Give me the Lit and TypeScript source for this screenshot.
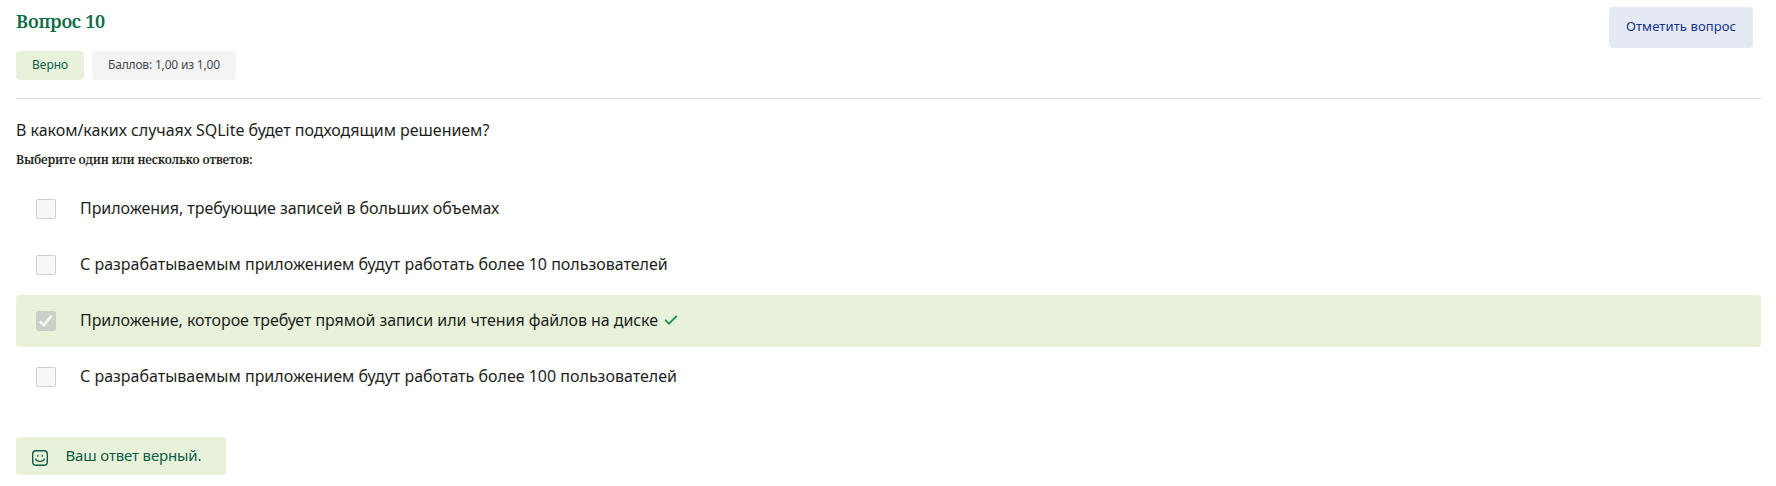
import { LitElement, html, css, nothing } from "lit";
import { customElement } from "lit/decorators.js";
import { classMap } from "lit/directives/class-map.js";

interface Answer {
  text: string;
  checked?: boolean;
}

const ANSWERS: Answer[] = [
  { text: "Приложения, требующие записей в больших объемах" },
  { text: "С разрабатываемым приложением будут работать более 10 пользователей" },
  { text: "Приложение, которое требует прямой записи или чтения файлов на диске", checked: true },
  { text: "С разрабатываемым приложением будут работать более 100 пользователей" },
];

@customElement("answer-list")
export class AnswerList extends LitElement {
  static styles = css`
    :host {
      display: flex;
      flex-direction: column;
      gap: 4px;
    }
    .row {
      display: flex;
      align-items: center;
      height: 52px;
      box-sizing: border-box;
      padding-left: 20px;
      border-radius: 4px;
      font-size: 16px;
      letter-spacing: -0.06px;
      color: #1d1f21;
    }
    .row:nth-child(even) {
      letter-spacing: 0;
    }
    .correct {
      background: #e8f2db;
    }
    .box {
      box-sizing: border-box;
      width: 20px;
      height: 20px;
      margin-right: 24px;
      border: 1px solid #cfcfcf;
      border-radius: 2px;
      background: #f8f8f8;
    }
    .checked {
      border: 0;
      background: #cbcfc8;
    }
    .box svg {
      display: block;
    }
    .text {
      line-height: 24px;
      padding-bottom: 2px;
      white-space: nowrap;
    }
    .tick {
      margin: 0 0 2px 6px;
    }
  `;

  render() {
    return ANSWERS.map(
      (a) => html`
        <div class=${classMap({ row: true, correct: !!a.checked })}>
          <span class=${classMap({ box: true, checked: !!a.checked })}>
            ${a.checked
              ? html`<svg width="20" height="20" viewBox="0 0 20 20" fill="none">
                  <path d="M4 10.2 7.8 14.2 15.7 4.6" stroke="#f4f7f1" stroke-width="2.7" />
                </svg>`
              : nothing}
          </span>
          <span class="text">${a.text}</span>
          ${a.checked
            ? html`<svg class="tick" width="14" height="12" viewBox="0 0 14 12" fill="none">
                <path d="M1.2 5.9 5 9.7 12.8 1.9" stroke="#1f8b4c" stroke-width="1.9" />
              </svg>`
            : nothing}
        </div>
      `,
    );
  }
}

@customElement("app-root")
export class AppRoot extends LitElement {
  static styles = css`
    :host {
      display: block;
      box-sizing: border-box;
      height: 486px;
      padding: 7px 15px 0 16px;
      background: #fff;
      font-family: "Noto Sans", "Open Sans", sans-serif;
      color: #1d1f21;
    }
    header {
      display: flex;
      justify-content: space-between;
      align-items: flex-start;
      box-sizing: border-box;
      height: 92px;
      padding-right: 8px;
      border-bottom: 1px solid #dadbdc;
    }
    h1 {
      margin: 2px 0 17px;
      font: 600 18px/25px "Noto Serif", "DejaVu Serif", serif;
      letter-spacing: -0.25px;
      color: #0a6b45;
    }
    .badges {
      display: flex;
      gap: 8px;
    }
    .badge {
      height: 29px;
      box-sizing: border-box;
      padding: 0 16px;
      border-radius: 4px;
      font-size: 12px;
      line-height: 28px;
      white-space: nowrap;
    }
    .ok {
      width: 68px;
      background: #e8f2db;
      color: #0d5c45;
    }
    .points {
      width: 144px;
      background: #f4f4f4;
      color: #46494c;
      letter-spacing: -0.18px;
    }
    button {
      width: 144px;
      height: 41px;
      padding: 0 0 2px;
      border: 0;
      border-radius: 4px;
      background: #e5e9f4;
      color: #12338a;
      font: 13px/39px "Noto Sans", "Open Sans", sans-serif;
      letter-spacing: 0.1px;
    }
    .question {
      margin: 19px 0 0;
      font-size: 16px;
      line-height: 24px;
      letter-spacing: -0.03px;
    }
    .hint {
      margin: 9px 0 14px;
      font: 600 12px/18px "Noto Serif", "DejaVu Serif", serif;
      letter-spacing: -0.2px;
    }
    .feedback {
      display: flex;
      align-items: center;
      box-sizing: border-box;
      width: 210px;
      height: 38px;
      margin-top: 34px;
      padding-left: 16px;
      border-radius: 4px;
      background: #e8f2db;
      color: #0d5c45;
      font-size: 15px;
      letter-spacing: -0.15px;
    }
    .feedback span {
      line-height: 22px;
      padding-bottom: 2px;
    }
    .feedback svg {
      margin: 4px 17.5px 0 0;
    }
  `;

  render() {
    return html`
      <header>
        <div>
          <h1>Вопрос 10</h1>
          <div class="badges">
            <span class="badge ok">Верно</span>
            <span class="badge points">Баллов: 1,00 из 1,00</span>
          </div>
        </div>
        <button>Отметить вопрос</button>
      </header>
      <p class="question">В каком/каких случаях SQLite будет подходящим решением?</p>
      <p class="hint">Выберите один или несколько ответов:</p>
      <answer-list></answer-list>
      <div class="feedback">
        <svg width="16" height="16" viewBox="0 0 16 16" fill="none" stroke="#0d5c45" stroke-width="1.4">
          <rect x="0.7" y="0.7" width="14.6" height="14.6" rx="3.4" />
          <path d="M3.6 8.6C4.4 12.3 11.6 12.3 12.4 8.6" />
          <circle cx="5.8" cy="5.8" r="0.9" fill="#0d5c45" stroke="none" />
          <circle cx="10.2" cy="5.8" r="0.9" fill="#0d5c45" stroke="none" />
        </svg>
        <span>Ваш ответ верный.</span>
      </div>
    `;
  }
}
